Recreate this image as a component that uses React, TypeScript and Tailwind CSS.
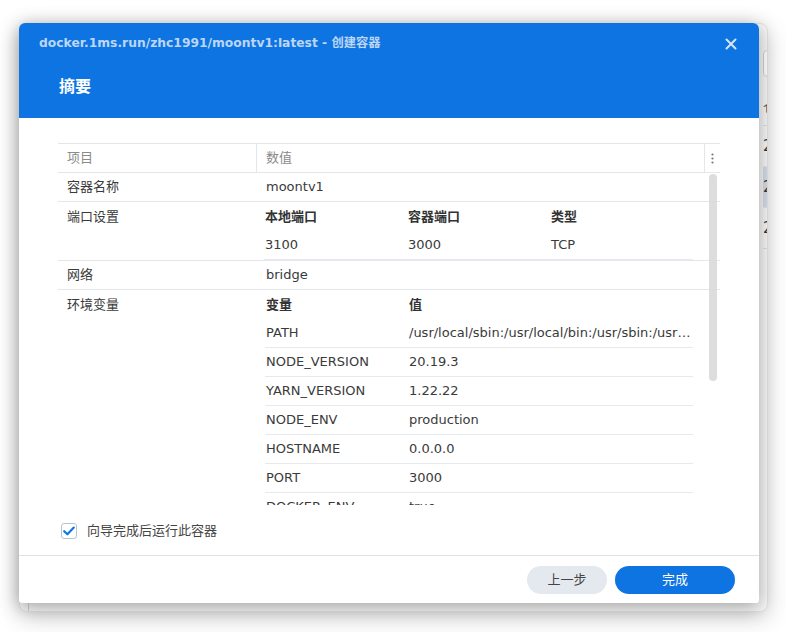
import React from "react";

const F = { fontFamily: '"DejaVu Sans", "Noto Sans CJK SC", sans-serif' };

function SubRow({ cells, bold }: { cells: string[]; bold?: boolean }) {
  return (
    <div className={`flex h-[29px] items-center ${bold ? "" : "border-b border-[#e6e9ee]"}`}>
      {cells.map((c, i) => (
        <div
          key={i}
          className={`${i === 1 && cells.length === 2 ? "flex-1 min-w-0" : "w-[143px] shrink-0"} pl-[1px] truncate ${bold ? "font-bold text-[#333]" : "text-[#3a3a3a]"}`}
        >
          {c}
        </div>
      ))}
    </div>
  );
}

export default function App() {
  const env = [
    ["PATH", "/usr/local/sbin:/usr/local/bin:/usr/sbin:/usr/bin:/sbin:/bin"],
    ["NODE_VERSION", "20.19.3"],
    ["YARN_VERSION", "1.22.22"],
    ["NODE_ENV", "production"],
    ["HOSTNAME", "0.0.0.0"],
    ["PORT", "3000"],
    ["DOCKER_ENV", "true"],
  ];
  return (
    <div className="relative w-[786px] h-[632px] bg-white overflow-hidden text-[13px]" style={F}>
      {/* background window */}
      <div className="absolute left-[19px] top-[23px] w-[749px] h-[589px] rounded-[8px] bg-[#f7f7f7] shadow-[0_6px_24px_rgba(0,0,0,0.18)] overflow-hidden border border-[#e2e2e2]">
        <div className="absolute left-[8px] top-[570px] h-[20px] border-l border-[#c9d3df]" />
        <div className="absolute left-[743px] top-0 w-[40px] flex flex-col">
          <div className="mt-[26px] h-[27px] rounded-[4px] border border-[#cfd4da] bg-white" />
          <div className="h-[38px] mt-[11px] border-b border-[#dcdfe3] text-[#666] text-[14px] leading-[38px]">仓</div>
          <div className="h-[41px] border-b border-[#e3e6ea] text-[#333] text-[15px] leading-[41px]">2</div>
          <div className="h-[41px] border-b border-[#e3e6ea] bg-[#d3dce8] text-[#333] text-[15px] leading-[41px]">2</div>
          <div className="h-[41px] border-b border-[#dcdfe3] text-[#333] text-[15px] leading-[41px]">2</div>
        </div>
      </div>

      {/* dialog */}
      <div className="absolute left-[19px] top-[23px] w-[740px] h-[580px] flex flex-col bg-white rounded-t-[6px] rounded-b-[3px] overflow-hidden shadow-[0_4px_18px_rgba(0,0,0,0.35)]">
        <div className="h-[95px] bg-[#0e74e2] flex flex-col">
          <div className="flex items-center justify-between pl-[20px] pr-[20px] pt-[12px] h-[28px]">
            <div className="text-[12.3px] font-bold text-[#bcd6f6] leading-[16px]">
              docker.1ms.run/zhc1991/moontv1:latest - 创建容器
            </div>
            <svg width="12" height="12" viewBox="0 0 12 12" className="mr-[2px] mt-[1px]">
              <path d="M1.5 1.5 L10.5 10.5 M10.5 1.5 L1.5 10.5" stroke="#d5e5fa" strokeWidth="2" strokeLinecap="round" />
            </svg>
          </div>
          <div className="pl-[40px] mt-[26px] text-[16px] font-bold text-white leading-[20px]">摘要</div>
        </div>

        <div className="flex-1 flex flex-col px-[39px] pt-[25px]">
          <div className="relative h-[362px] overflow-hidden">
            {/* header */}
            <div className="flex h-[30px] border-y border-[#e3e6ea] text-[#8a8a8a]">
              <div className="w-[198px] pl-[9px] flex items-center">项目</div>
              <div className="flex-1 pl-[9px] border-l border-[#e3e6ea] flex items-center">数值</div>
              <div className="w-[16px] border-l border-[#e3e6ea] flex items-center justify-center">
                <svg width="3" height="11" viewBox="0 0 3 11">
                  <circle cx="1.5" cy="1.5" r="1.1" fill="#777" />
                  <circle cx="1.5" cy="5.5" r="1.1" fill="#777" />
                  <circle cx="1.5" cy="9.5" r="1.1" fill="#777" />
                </svg>
              </div>
            </div>
            {/* 容器名称 */}
            <div className="flex h-[29px] items-center border-b border-[#e3e6ea] text-[#3a3a3a]">
              <div className="w-[198px] pl-[9px]">容器名称</div>
              <div className="flex-1 pl-[10px]">moontv1</div>
            </div>
            {/* 端口设置 */}
            <div className="flex border-b border-[#e3e6ea] text-[#3a3a3a]">
              <div className="w-[198px] pl-[9px] h-[29px] flex items-center">端口设置</div>
              <div className="flex-1 pl-[9px] pr-[27px]">
                <SubRow cells={["本地端口", "容器端口", "类型"]} bold />
                <SubRow cells={["3100", "3000", "TCP"]} />
              </div>
            </div>
            {/* 网络 */}
            <div className="flex h-[29px] items-center border-b border-[#e3e6ea] text-[#3a3a3a]">
              <div className="w-[198px] pl-[9px]">网络</div>
              <div className="flex-1 pl-[10px]">bridge</div>
            </div>
            {/* 环境变量 */}
            <div className="flex text-[#3a3a3a]">
              <div className="w-[198px] pl-[9px] h-[29px] flex items-center">环境变量</div>
              <div className="flex-1 min-w-0 pl-[9px] pr-[27px]">
                <SubRow cells={["变量", "值"]} bold />
                {env.map((r) => (
                  <SubRow key={r[0]} cells={r} />
                ))}
              </div>
            </div>
            {/* scrollbar */}
            <div className="absolute left-[651px] top-[31px] w-[8px] h-[207px] rounded-full bg-[#dddddd]" />
          </div>

          <div className="mt-[16px] flex items-center pl-[3px]">
            <div className="w-[16px] h-[16px] rounded-[3px] border border-[#b8c4d2] bg-white flex items-center justify-center">
              <svg width="12" height="10" viewBox="0 0 12 10">
                <path d="M1.2 5.2 L4.4 8.3 L10.8 1.5" stroke="#0e74e2" strokeWidth="2.1" fill="none" strokeLinecap="round" strokeLinejoin="round" />
              </svg>
            </div>
            <div className="ml-[10px] text-[#444]">向导完成后运行此容器</div>
          </div>
        </div>

        <div className="h-[48px] border-t border-[#dfe3e8] flex items-center justify-end pr-[24px] gap-[8px]">
          <button className="w-[80px] h-[28px] rounded-full bg-[#e4e9f0] text-[#444] text-[13px]">上一步</button>
          <button className="w-[120px] h-[28px] rounded-full bg-[#0e74e2] text-white text-[13px]">完成</button>
        </div>
      </div>
    </div>
  );
}
